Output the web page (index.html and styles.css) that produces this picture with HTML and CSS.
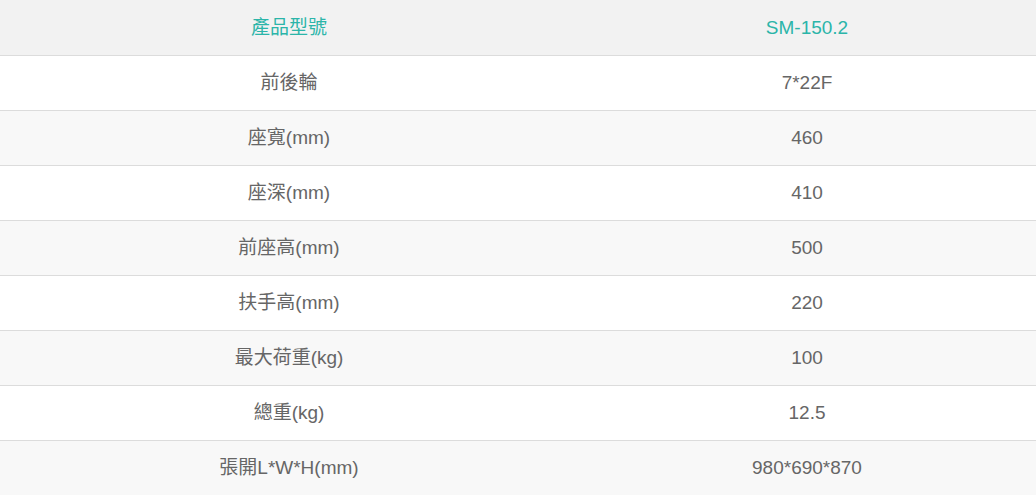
FILE: index.html
```html
<!DOCTYPE html>
<html lang="zh-Hant">
<head>
<meta charset="utf-8">
<link rel="stylesheet" href="styles.css">
</head>
<body>
<table class="spec">
  <thead>
    <tr><th class="c1">產品型號</th><th class="c2">SM-150.2</th></tr>
  </thead>
  <tbody>
    <tr><td>前後輪</td><td>7*22F</td></tr>
    <tr><td>座寬(mm)</td><td>460</td></tr>
    <tr><td>座深(mm)</td><td>410</td></tr>
    <tr><td>前座高(mm)</td><td>500</td></tr>
    <tr><td>扶手高(mm)</td><td>220</td></tr>
    <tr><td>最大荷重(kg)</td><td>100</td></tr>
    <tr><td>總重(kg)</td><td>12.5</td></tr>
    <tr><td>張開L*W*H(mm)</td><td>980*690*870</td></tr>
  </tbody>
</table>
</body>
</html>
```
FILE: styles.css
```css
html, body {
  margin: 0;
  padding: 0;
  background: #fff;
}
.spec {
  width: 1036px;
  border-collapse: collapse;
  table-layout: fixed;
  font-family: "Liberation Sans", Arial, "Noto Sans CJK TC", sans-serif;
  font-size: 19px;
  line-height: 24px;
  color: #666;
}
.spec th, .spec td {
  height: 54px;
  padding: 0;
  text-align: center;
  vertical-align: middle;
  font-weight: normal;
}
.spec thead th {
  height: 55px;
}
.spec .c1 { width: 578px; }
.spec thead th {
  background: #f2f2f2;
  color: #2bb5a9;
  border-bottom: 1px solid #dcdcdc;
}
.spec tbody td {
  border-top: 1px solid #dcdcdc;
}
.spec tbody tr:nth-child(even) td {
  background: #f8f8f8;
}
```
